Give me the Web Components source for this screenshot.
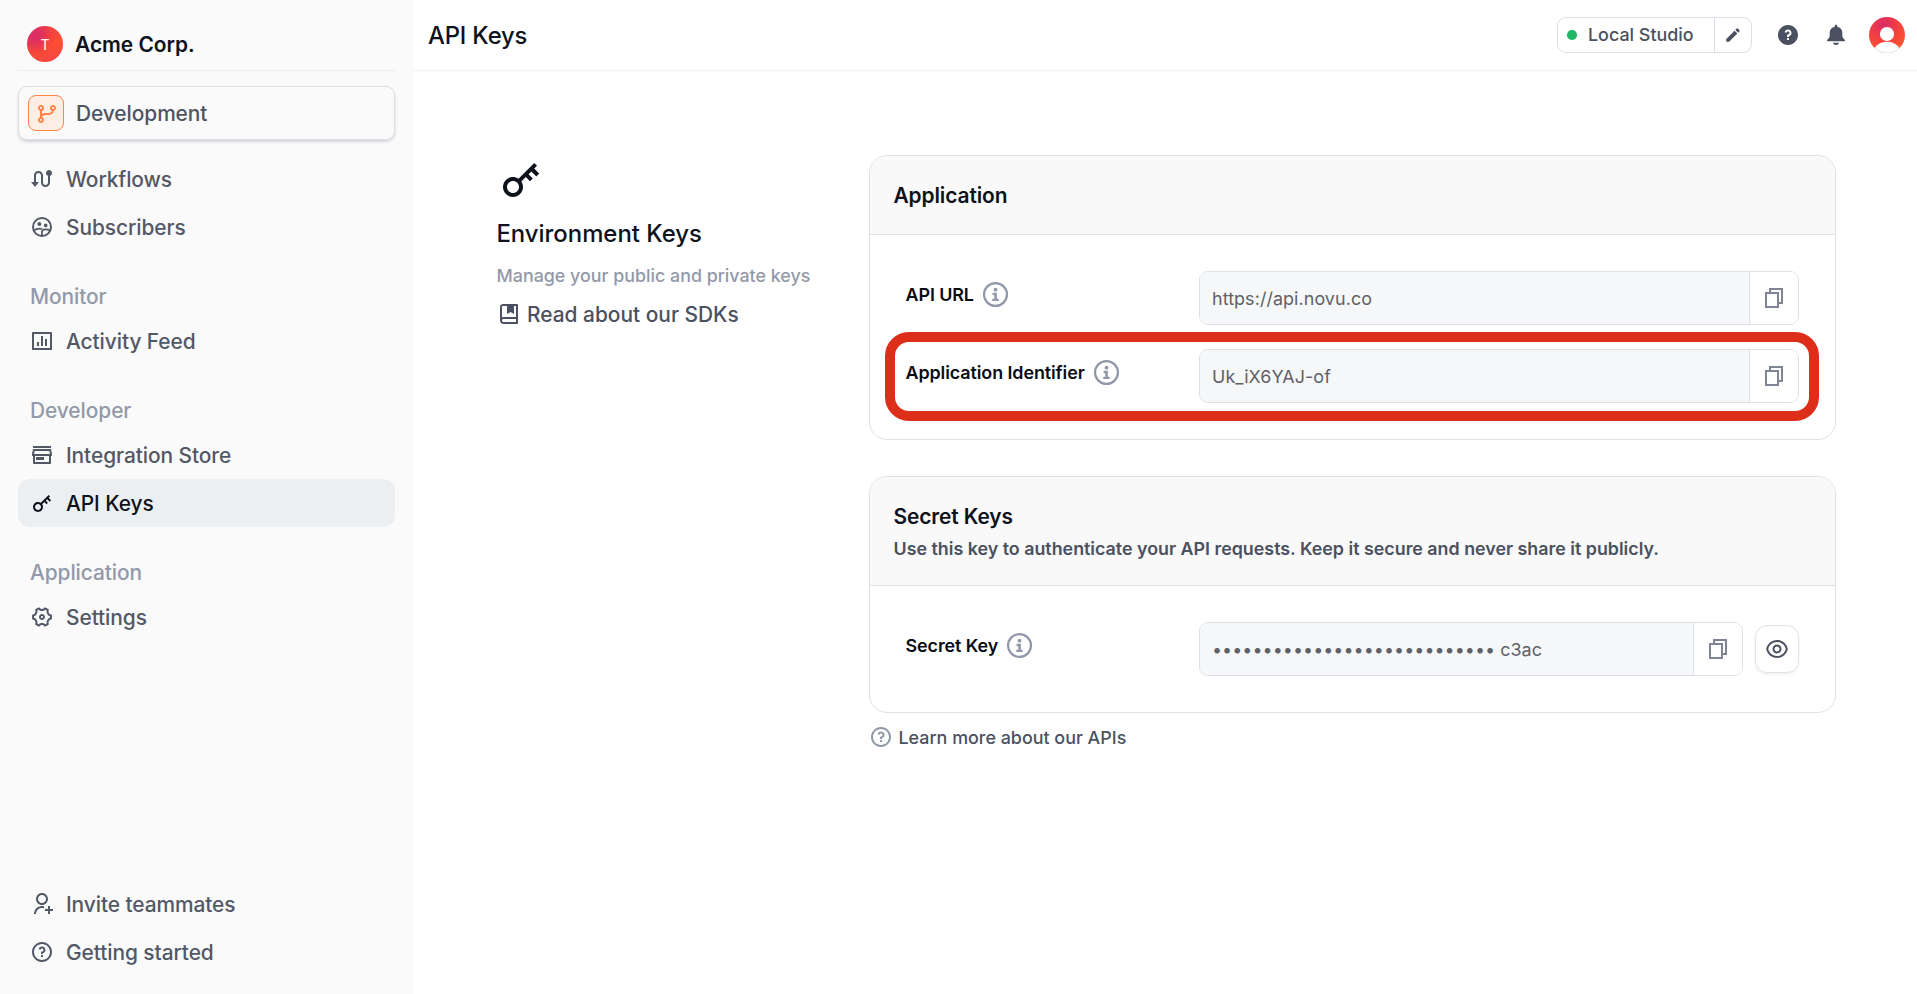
<!DOCTYPE html>
<html lang="en">
<head>
<meta charset="utf-8">
<title>API Keys</title>
<style>
  html, body { margin: 0; height: 100%; overflow: hidden; }
  body { font-family: Inter, "Open Sans", sans-serif; font-weight: 500; background: #fff; color: #0e121b; }
</style>
</head>
<body>
<app-shell>
  <side-nav slot="nav"></side-nav>
  <top-bar slot="bar"></top-bar>
  <page-intro slot="intro"></page-intro>
  <settings-card heading="Application">
    <field-row label="API URL"><copy-field>https://api.novu.co</copy-field></field-row>
    <field-row label="Application Identifier" highlighted><copy-field>Uk_iX6YAJ-of</copy-field></field-row>
  </settings-card>
  <settings-card class="second" heading="Secret Keys" note="Use this key to authenticate your API requests. Keep it secure and never share it publicly.">
    <field-row label="Secret Key"><copy-field masked>c3ac</copy-field><eye-button></eye-button></field-row>
  </settings-card>
  <help-link>Learn more about our APIs</help-link>
</app-shell>

<script>
const Q = 'M11 15H13V17H11V15ZM13 13.3551V14H11V12.5C11 11.9477 11.4477 11.5 12 11.5C12.8284 11.5 13.5 10.8284 13.5 10C13.5 9.17157 12.8284 8.5 12 8.5C11.2723 8.5 10.6656 9.01823 10.5288 9.70577L8.56731 9.31346C8.88637 7.70919 10.302 6.5 12 6.5C13.933 6.5 15.5 8.067 15.5 10C15.5 11.5855 14.4457 12.9248 13 13.3551Z';
const DISC = 'M12 22C6.47715 22 2 17.5228 2 12C2 6.47715 6.47715 2 12 2C17.5228 2 22 6.47715 22 12C22 17.5228 17.5228 22 12 22Z';
const p = d => `<path fill="currentColor" d="${d}"/>`;
const ICONS = {
  route: p('M4 15V8.5C4 6.01472 6.01472 4 8.5 4C10.9853 4 13 6.01472 13 8.5V15.5C13 16.8807 14.1193 18 15.5 18C16.8807 18 18 16.8807 18 15.5V8.82929C16.8348 8.41746 16 7.30622 16 6C16 4.34315 17.3431 3 19 3C20.6569 3 22 4.34315 22 6C22 7.30622 21.1652 8.41746 20 8.82929V15.5C20 17.9853 17.9853 20 15.5 20C13.0147 20 11 17.9853 11 15.5V8.5C11 7.11929 9.88071 6 8.5 6C7.11929 6 6 7.11929 6 8.5V15H9L5 20L1 15H4Z'),
  group: `<g fill="none" stroke="currentColor" stroke-width="2"><circle cx="12" cy="12" r="9"/><path stroke-width="1.7" d="M3.8 15.6C5.4 14.3 7.6 13.6 9.6 13.6c1 0 1.9.15 2.7.4M11.9 21v-3.6c0-1.9 1.8-3 4.1-3 1.3 0 2.8.35 4.1 1"/></g><circle cx="9.4" cy="9.1" r="2" fill="currentColor"/><circle cx="15.7" cy="10.4" r="1.8" fill="currentColor"/>`,
  chart: p('M3 3H21C21.5523 3 22 3.2 22 3.6V20.4C22 20.8 21.5523 21 21 21H3C2.44772 21 2 20.8 2 20.4V3.6C2 3.2 2.44772 3 3 3ZM4 5V19H20V5H4ZM7 13H9V17H7V13ZM11 7H13V17H11V7ZM15 10H17V17H15V10Z'),
  store: p('M21 13V20C21 20.5523 20.5523 21 20 21H4C3.44772 21 3 20.5523 3 20V13H2V11L3 6H21L22 11V13H21ZM5 13V19H19V13H5ZM4.03961 11H19.9604L19.3604 8H4.63961L4.03961 11ZM6 14H14V17H6V14ZM3 3H21V5H3V3Z'),
  key: p('M10.7577 11.8281L18.6066 3.97919L20.0208 5.3934L18.6066 6.80761L21.0815 9.28249L19.6673 10.6967L17.1924 8.22183L15.7782 9.63604L17.8995 11.7574L16.4853 13.1716L14.364 11.0503L12.1719 13.2423C13.4581 15.1837 13.246 17.8251 11.5355 19.5355C9.58291 21.4882 6.41709 21.4882 4.46447 19.5355C2.51184 17.5829 2.51184 14.4171 4.46447 12.4645C6.17493 10.754 8.81633 10.5419 10.7577 11.8281ZM10.1213 18.1213C11.2929 16.9497 11.2929 15.0503 10.1213 13.8787C8.94975 12.7071 7.05025 12.7071 5.87868 13.8787C4.70711 15.0503 4.70711 16.9497 5.87868 18.1213C7.05025 19.2929 8.94975 19.2929 10.1213 18.1213Z'),
  gear: p('M2 11.9998C2 11.1353 2.1097 10.2964 2.31595 9.49631C3.40622 9.55283 4.48848 9.01015 5.0718 7.99982C5.65467 6.99025 5.58406 5.78271 4.99121 4.86701C6.18354 3.69529 7.66832 2.82022 9.32603 2.36133C9.8222 3.33385 10.8333 3.99982 12 3.99982C13.1667 3.99982 14.1778 3.33385 14.674 2.36133C16.3317 2.82022 17.8165 3.69529 19.0088 4.86701C18.4159 5.78271 18.3453 6.99025 18.9282 7.99982C19.5115 9.01015 20.5938 9.55283 21.6841 9.49631C21.8903 10.2964 22 11.1353 22 11.9998C22 12.8643 21.8903 13.7032 21.6841 14.5033C20.5938 14.4468 19.5115 14.9895 18.9282 15.9998C18.3453 17.0094 18.4159 18.2169 19.0088 19.1326C17.8165 20.3043 16.3317 21.1794 14.674 21.6383C14.1778 20.6658 13.1667 19.9998 12 19.9998C10.8333 19.9998 9.8222 20.6658 9.32603 21.6383C7.66832 21.1794 6.18354 20.3043 4.99121 19.1326C5.58406 18.2169 5.65467 17.0094 5.0718 15.9998C4.48848 14.9895 3.40622 14.4468 2.31595 14.5033C2.1097 13.7032 2 12.8643 2 11.9998ZM6.80385 14.9998C7.43395 16.0912 7.61458 17.3459 7.36818 18.5236C7.77597 18.8138 8.21005 19.0652 8.66489 19.2741C9.56176 18.4712 10.7392 17.9998 12 17.9998C13.2608 17.9998 14.4382 18.4712 15.3351 19.2741C15.7899 19.0652 16.224 18.8138 16.6318 18.5236C16.3854 17.3459 16.566 16.0912 17.1962 14.9998C17.8262 13.9085 18.8225 13.1248 19.9655 12.7493C19.9884 12.5015 20 12.2516 20 11.9998C20 11.7481 19.9884 11.4981 19.9655 11.2504C18.8225 10.8749 17.8262 10.0912 17.1962 8.99982C16.566 7.90845 16.3854 6.65378 16.6318 5.47605C16.224 5.18588 15.7899 4.93447 15.3351 4.72552C14.4382 5.52844 13.2608 5.99982 12 5.99982C10.7392 5.99982 9.56176 5.52844 8.66489 4.72552C8.21005 4.93447 7.77597 5.18588 7.36818 5.47605C7.61458 6.65378 7.43395 7.90845 6.80385 8.99982C6.17376 10.0912 5.17754 10.8749 4.03451 11.2504C4.01157 11.4981 4 11.7481 4 11.9998C4 12.2516 4.01157 12.5015 4.03451 12.7493C5.17754 13.1248 6.17376 13.9085 6.80385 14.9998ZM12 14.9998C10.3431 14.9998 9 13.6567 9 11.9998C9 10.343 10.3431 8.99982 12 8.99982C13.6569 8.99982 15 10.343 15 11.9998C15 13.6567 13.6569 14.9998 12 14.9998ZM12 12.9998C12.5523 12.9998 13 12.5521 13 11.9998C13 11.4475 12.5523 10.9998 12 10.9998C11.4477 10.9998 11 11.4475 11 11.9998C11 12.5521 11.4477 12.9998 12 12.9998Z'),
  invite: p('M14 14.252V16.3414C13.3744 16.1203 12.7013 16 12 16C8.68629 16 6 18.6863 6 22H4C4 17.5817 7.58172 14 12 14C12.6906 14 13.3608 14.0875 14 14.252ZM12 13C8.685 13 6 10.315 6 7C6 3.685 8.685 1 12 1C15.315 1 18 3.685 18 7C18 10.315 15.315 13 12 13ZM12 11C14.21 11 16 9.21 16 7C16 4.79 14.21 3 12 3C9.79 3 8 4.79 8 7C8 9.21 9.79 11 12 11ZM18 17V14H20V17H23V19H20V22H18V19H15V17H18Z'),
  question: p(DISC + 'M12 20C16.4183 20 20 16.4183 20 12C20 7.58172 16.4183 4 12 4C7.58172 4 4 7.58172 4 12C4 16.4183 7.58172 20 12 20Z' + Q),
  questionFill: `<path fill="currentColor" fill-rule="evenodd" d="${DISC + Q}"/>`,
  bell: p('M12 1.8c.75 0 1.3.55 1.3 1.25v.75c2.9.55 5 2.9 5 5.9v2.6c0 1.6.6 2.7 1.7 3.7.6.55 1 1.05 1 1.5 0 .5-.4.8-.9.8H3.9c-.5 0-.9-.3-.9-.8 0-.45.4-.95 1-1.5 1.1-1 1.7-2.1 1.7-3.7V9.7c0-3 2.1-5.35 5-5.9v-.75c0-.7.55-1.25 1.3-1.25zM9 19.8h6c-.3 1.3-1.5 2.3-3 2.3s-2.7-1-3-2.3z'),
  pencil: p('M3 17.25V21h3.75L17.81 9.94l-3.75-3.75L3 17.25zM20.71 7.04c.39-.39.39-1.02 0-1.41l-2.34-2.34c-.39-.39-1.02-.39-1.41 0l-1.83 1.83 3.75 3.75 1.83-1.83z'),
  branch: p('M7.10508 15.2101C8.21506 15.6501 9 16.7334 9 18C9 19.6569 7.65685 21 6 21C4.34315 21 3 19.6569 3 18C3 16.6938 3.83481 15.5825 5 15.1707V8.82929C3.83481 8.41746 3 7.30622 3 6C3 4.34315 4.34315 3 6 3C7.65685 3 9 4.34315 9 6C9 7.30622 8.16519 8.41746 7 8.82929V11.9996C7.83566 11.3719 8.87439 11 10 11H14C15.3835 11 16.5482 10.0635 16.8949 8.78991C15.7849 8.34988 15 7.26661 15 6C15 4.34315 16.3431 3 18 3C19.6569 3 21 4.34315 21 6C21 7.3332 20.1303 8.46329 18.9274 8.85392C18.5222 11.2085 16.4703 13 14 13H10C8.61653 13 7.4518 13.9365 7.10508 15.2101ZM6 17C5.44772 17 5 17.4477 5 18C5 18.5523 5.44772 19 6 19C6.55228 19 7 18.5523 7 18C7 17.4477 6.55228 17 6 17ZM6 5C5.44772 5 5 5.44772 5 6C5 6.55228 5.44772 7 6 7C6.55228 7 7 6.55228 7 6C7 5.44772 6.55228 5 6 5ZM18 5C17.4477 5 17 5.44772 17 6C17 6.55228 17.4477 7 18 7C18.5523 7 19 6.55228 19 6C19 5.44772 18.5523 5 18 5Z'),
  book: p('M3 18.5V5C3 3.34315 4.34315 2 6 2H20C20.5523 2 21 2.44772 21 3V21C21 21.5523 20.5523 22 20 22H6.5C4.567 22 3 20.433 3 18.5ZM19 20V17H6.5C5.67157 17 5 17.6716 5 18.5C5 19.3284 5.67157 20 6.5 20H19ZM10 4H6C5.44772 4 5 4.44772 5 5V15.3368C5.45463 15.1208 5.9632 15 6.5 15H19V4H17V12L13.5 10L10 12V4Z'),
  eye: p('M12.0003 3C17.3924 3 21.8784 6.87976 22.8189 12C21.8784 17.1202 17.3924 21 12.0003 21C6.60812 21 2.12215 17.1202 1.18164 12C2.12215 6.87976 6.60812 3 12.0003 3ZM12.0003 19C16.2359 19 19.8603 16.052 20.7777 12C19.8603 7.94803 16.2359 5 12.0003 5C7.7646 5 4.14022 7.94803 3.22278 12C4.14022 16.052 7.7646 19 12.0003 19ZM12.0003 16.5C9.51498 16.5 7.50026 14.4853 7.50026 12C7.50026 9.51472 9.51498 7.5 12.0003 7.5C14.4855 7.5 16.5003 9.51472 16.5003 12C16.5003 14.4853 14.4855 16.5 12.0003 16.5ZM12.0003 14.5C13.381 14.5 14.5003 13.3807 14.5003 12C14.5003 10.6193 13.381 9.5 12.0003 9.5C10.6196 9.5 9.50026 10.6193 9.50026 12C9.50026 13.3807 10.6196 14.5 12.0003 14.5Z'),
  copy: '<g fill="none" stroke="currentColor" stroke-width="2"><path d="M4 7h12v14H4z"/><path d="M8 7V3h12v14h-4"/></g>',
  info: '<circle cx="12" cy="12" r="11" fill="none" stroke="currentColor" stroke-width="2.1"/><circle cx="12" cy="7.4" r="1.8" fill="currentColor"/><path fill="currentColor" d="M9.2 10.4h4.100v5.600h1.700v2.200H8.900v-2.200h2v-3.400H9.200z"/>'
};

const define = (tag, render) => customElements.define(tag, class extends HTMLElement {
  constructor() { super(); this.attachShadow({ mode: 'open' }); }
  connectedCallback() { this.shadowRoot.innerHTML = render(this); }
});

define('ui-icon', el => {
  const s = el.getAttribute('size') || 24;
  return `<style>:host{display:block;flex:none;width:${s}px;height:${s}px}svg{display:block;width:100%;height:100%;overflow:visible}</style>
  <svg viewBox="0 0 24 24" aria-hidden="true">${ICONS[el.getAttribute('name')]}</svg>`;
});

define('app-shell', () => `<style>
  :host{display:grid;grid-template-columns:413px 1fr;height:100vh}
  .right{display:flex;flex-direction:column;min-width:0}
  main{display:grid;grid-template-columns:372px 967px;padding:84px 0 0 84px}
  .cards{display:flex;flex-direction:column}
  ::slotted(.second){margin-top:36px}
</style>
<slot name="nav"></slot>
<div class="right"><slot name="bar"></slot><main><slot name="intro"></slot><div class="cards"><slot></slot></div></main></div>`);

define('nav-item', () => `<style>
  :host{display:flex;align-items:center;gap:12px;height:47.8px;padding:0 12px;border-radius:12px;box-sizing:border-box;color:#525866;font-size:20.9px;letter-spacing:-.07px}
  :host([active]){background:#ebeff2;color:#0e121b}
</style><slot name="icon"></slot><slot></slot>`);

define('nav-heading', () => `<style>
  :host{display:block;height:66.3px;box-sizing:border-box;padding:31px 12px 0;font-size:20.9px;line-height:30px;letter-spacing:-.07px;color:#9299a8}
</style><slot></slot>`);

const item = (icon, text, active = '') => `<nav-item ${active}><ui-icon slot="icon" name="${icon}"></ui-icon>${text}</nav-item>`;
define('side-nav', () => `<style>
  :host{display:flex;flex-direction:column;box-sizing:border-box;background:#fafafa;padding:0 18px 18px;height:100vh}
  .org{display:flex;align-items:center;gap:12px;height:71px;box-sizing:border-box;padding:18px 9px 0;border-bottom:1px solid #ededf1;font-size:20.9px;font-weight:600}
  .logo{width:36px;height:36px;border-radius:50%;display:grid;place-items:center;font-size:14px;font-weight:500;color:#ffe9e6;
    background:radial-gradient(circle at 22% 26%,#d92b69 0,#e23457 22%,rgba(240,64,64,.5) 45%,transparent 62%),linear-gradient(160deg,#ee3f48,#ff5030 55%,#f2404a)}
  .env{display:flex;align-items:center;gap:12px;margin-top:15px;height:54px;box-sizing:border-box;padding:0 9px;border:1px solid #dcdee6;border-radius:9px;box-shadow:0 2px 3px rgba(20,25,50,.16);color:#4d5462;font-size:20.9px;letter-spacing:-.07px}
  .badge{width:36px;height:36px;box-sizing:border-box;border:1px solid #ff8447;border-radius:8px;background:#fcede5;color:#ff8447;display:grid;place-items:center}
  .badge ui-icon{margin:1px 0 0 1px}
  nav{margin-top:15.6px}
  .foot{margin-top:auto}
</style>
<div class="org"><span class="logo">T</span>Acme Corp.</div>
<div class="env"><span class="badge"><ui-icon name="branch"></ui-icon></span>Development</div>
<nav>${item('route', 'Workflows')}${item('group', 'Subscribers')}
<nav-heading>Monitor</nav-heading>${item('chart', 'Activity Feed')}
<nav-heading>Developer</nav-heading>${item('store', 'Integration Store')}${item('key', 'API Keys', 'active')}
<nav-heading>Application</nav-heading>${item('gear', 'Settings')}</nav>
<div class="foot">${item('invite', 'Invite teammates')}${item('question', 'Getting started')}</div>`);

define('user-avatar', () => `<style>:host{display:block;width:36px;height:36px}svg{display:block}</style>
<svg width="36" height="36" viewBox="0 0 36 36"><defs>
<radialGradient id="g" cx=".4" cy=".2" r=".75"><stop offset="0" stop-color="#d92b66"/><stop offset=".55" stop-color="#f4403f"/><stop offset="1" stop-color="#ff5330"/></radialGradient>
<clipPath id="c"><circle cx="18" cy="18" r="18"/></clipPath></defs>
<g clip-path="url(#c)"><rect width="36" height="36" fill="url(#g)"/><circle cx="18" cy="17" r="7.1" fill="#fff"/><ellipse cx="18" cy="36.5" rx="14" ry="11.7" fill="#fff"/></g>
<path d="M5.3 30.7a18 18 0 0 0 25.4 0" fill="none" stroke="#e3e3ea" stroke-width=".7"/></svg>`);

define('top-bar', () => `<style>
  :host{display:flex;align-items:center;height:71px;box-sizing:border-box;border-bottom:1px solid #f0f0f6;padding:0 12px 0 15px;color:#4b5160}
  h1{margin:1px auto 0 0;font-size:23.8px;line-height:30px;letter-spacing:-.15px;font-weight:500;color:#0e121b}
  .studio{display:flex;height:36px;box-sizing:border-box;border:1px solid #dcdee6;border-radius:9px;font-size:17.9px;line-height:22px;width:195px}
  .name{display:flex;align-items:center;width:157px;box-sizing:border-box;border-right:1px solid #dcdee6;padding:0 0 1px 9px;gap:11.5px}
  .name i{width:9.5px;height:9.5px;border-radius:50%;background:#1fb866;margin-top:1px}
  .edit{flex:1;display:grid;place-items:center}
  .i1{margin-left:24px}.i2{margin:0 21px 0 24px}
</style>
<h1>API Keys</h1>
<div class="studio"><span class="name"><i></i>Local Studio</span><span class="edit"><ui-icon name="pencil" size="18"></ui-icon></span></div>
<ui-icon class="i1" name="questionFill"></ui-icon><ui-icon class="i2" name="bell"></ui-icon><user-avatar></user-avatar>`);

define('page-intro', () => `<style>
  :host{display:block}
  h2{margin:14px 0 0 -.6px;font-size:23.9px;line-height:34px;font-weight:500}
  p{margin:13px 0 0 -.5px;font-size:17.85px;line-height:24px;color:#9299a8}
  a{display:flex;align-items:center;gap:6px;margin-top:11px;height:30px;font-size:20.9px;color:#4b5160}
</style>
<ui-icon name="key" size="48"></ui-icon>
<h2>Environment Keys</h2><p>Manage your public and private keys</p>
<a><ui-icon name="book"></ui-icon>Read about our SDKs</a>`);

define('settings-card', el => `<style>
  :host{display:block;border:1px solid #dfe0e8;border-radius:18px;overflow:hidden}
  header{background:#f9f9f9;border-bottom:1px solid #dfe0e8;padding:24px 24px 23px 23.5px;font-size:20.9px;font-weight:600;line-height:31px;letter-spacing:-.1px}
  header.noted{padding-bottom:21px}
  p{margin:2px 0 0;font-size:17.85px;line-height:30px;height:30px;letter-spacing:0;color:#4b5160}
  .body{display:flex;flex-direction:column;gap:24px;padding:36px}
</style>
<header class="${el.hasAttribute('note') ? 'noted' : ''}">${el.getAttribute('heading')}${el.hasAttribute('note') ? `<p>${el.getAttribute('note')}</p>` : ''}</header>
<div class="body"><slot></slot></div>`);

define('field-row', el => `<style>
  :host{display:grid;grid-template-columns:293px 1fr;height:54px;position:relative}
  label{display:flex;align-items:center;gap:9px;height:46px;margin-left:-.5px;font-size:17.9px;font-weight:600;letter-spacing:-.08px;color:#0a0d14}
  label ui-icon{color:#8f97a8}
  .controls{display:flex;align-items:center;gap:12px}
  .ring{position:absolute;inset:-17px -20px -18px -21px;border:10px solid #dd2e1a;border-radius:24px;pointer-events:none}
</style>
<label>${el.getAttribute('label')}<ui-icon name="info" size="25"></ui-icon></label>
<div class="controls"><slot></slot></div>${el.hasAttribute('highlighted') ? '<div class="ring"></div>' : ''}`);

define('copy-field', el => `<style>
  :host{flex:1;display:flex;height:54px;box-sizing:border-box;border:1px solid #dcdfe6;border-radius:9px;overflow:hidden;font-size:17.9px;font-weight:400;letter-spacing:.08px;color:#5f6168}
  .value{flex:1;display:flex;align-items:center;gap:5px;background:#f5f7f9;border-right:1px solid #dcdfe6;padding:1px 0 0 12px}
  .dots{font-size:17.9px;white-space:nowrap;letter-spacing:.05px}
  .btn{width:48px;display:grid;place-items:center;color:#7f8595;background:#fff}
</style>
<div class="value">${el.hasAttribute('masked') ? `<span class="dots">${'•'.repeat(28)}</span>` : ''}<span><slot></slot></span></div>
<div class="btn"><ui-icon name="copy"></ui-icon></div>`);

define('eye-button', () => `<style>
  :host{display:grid;place-items:center;width:44px;height:48px;box-sizing:border-box;border:1px solid #dfe0e8;border-radius:12px;box-shadow:0 2px 3px rgba(20,25,50,.05);color:#4b5160}
</style><ui-icon name="eye"></ui-icon>`);

define('help-link', () => `<style>
  :host{display:flex;align-items:center;gap:5.5px;margin-top:9px;height:30px;font-size:17.9px;color:#4b5160}
  ui-icon{color:#8f97a8}
</style><ui-icon name="question"></ui-icon><slot></slot>`);
</script>
</body>
</html>
